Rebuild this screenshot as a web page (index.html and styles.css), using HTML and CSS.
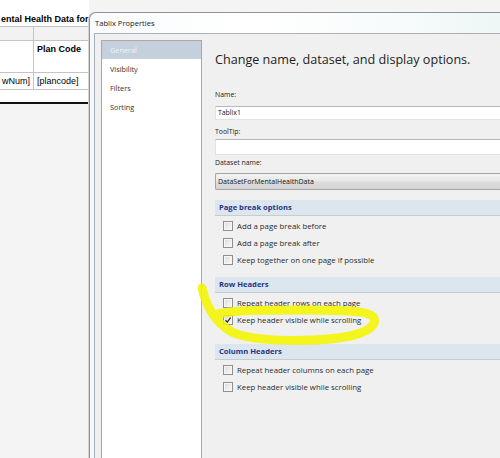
FILE: index.html
```html
<!DOCTYPE html>
<html>
<head>
<meta charset="utf-8">
<link rel="stylesheet" href="styles.css">
</head>
<body>
<div class="designer">
  <div class="rpt-title">ental Health Data for</div>
  <div class="rpt-table">
    <div class="rpt-row r0"><div class="c1"></div><div class="c2"></div></div>
    <div class="rpt-row r1"><div class="c1"></div><div class="c2 bold">Plan Code</div></div>
    <div class="rpt-row r2"><div class="c1 right">wNum]</div><div class="c2">[plancode]</div></div>
  </div>
  <div class="rpt-gap"></div>
  <div class="rpt-rule"></div>
  <div class="rpt-canvas"></div>
</div>

<div class="dialog">
  <div class="titlebar">Tablix Properties</div>
  <div class="dlg-body">
    <div class="nav">
      <div class="nav-item selected">General</div>
      <div class="nav-item">Visibility</div>
      <div class="nav-item">Filters</div>
      <div class="nav-item">Sorting</div>
    </div>
    <div class="content">
      <div class="heading">Change name, dataset, and display options.</div>
      <div class="label l-name">Name:</div>
      <div class="input i-name">Tablix1</div>
      <div class="label l-tip">ToolTip:</div>
      <div class="input i-tip"></div>
      <div class="label l-ds">Dataset name:</div>
      <div class="combo">DataSetForMentalHealthData</div>

      <div class="section s-page">Page break options</div>
      <div class="items">
        <div class="item"><span class="cb"></span><span>Add a page break before</span></div>
        <div class="item"><span class="cb"></span><span>Add a page break after</span></div>
        <div class="item"><span class="cb"></span><span>Keep together on one page if possible</span></div>
      </div>

      <div class="section s-row">Row Headers</div>
      <div class="items">
        <div class="item"><span class="cb"></span><span>Repeat header rows on each page</span></div>
        <div class="item"><span class="cb checked"><svg viewBox="0 0 10 10" width="10" height="10"><path d="M2.5 5.2 L4.2 7.2 L7.6 2.6" fill="none" stroke="#2a2a2a" stroke-width="1.2"/></svg></span><span>Keep header visible while scrolling</span></div>
      </div>

      <div class="section s-col">Column Headers</div>
      <div class="items">
        <div class="item"><span class="cb"></span><span>Repeat header columns on each page</span></div>
        <div class="item"><span class="cb"></span><span>Keep header visible while scrolling</span></div>
      </div>
    </div>
  </div>
</div>

<svg class="marker" viewBox="0 0 500 458" width="500" height="458">
  <path d="M202 288 C 206 305, 214 322, 232 332 C 255 343, 320 342, 350 336 C 368 332, 377 325, 374 318 C 370 310, 340 310, 300 310 C 260 310, 235 310, 218 314" fill="none" stroke="#f4f400" stroke-width="9" stroke-linecap="round" stroke-linejoin="round" opacity="0.88"/>
</svg>
</body>
</html>
```

FILE: styles.css
```css
html, body {
  margin: 0;
  padding: 0;
}
body {
  width: 500px;
  height: 458px;
  overflow: hidden;
  position: relative;
  background: #f4f4f4;
  font-family: "Open Sans", "Noto Sans", sans-serif;
}

/* ---------- report designer behind the dialog ---------- */
.designer {
  width: 89px;
  height: 458px;
  overflow: hidden;
  display: flex;
  flex-direction: column;
  font-family: "Liberation Sans", Arial, sans-serif;
  color: #000;
}
.rpt-title {
  background: #fff;
  height: 13px;
  padding-top: 13px;
  line-height: 12px;
  font-size: 9px;
  font-weight: bold;
  padding-left: 1px;
  white-space: nowrap;
  overflow: hidden;
}
.rpt-table {
  background: #fff;
  border-top: 1px solid #c4c4c4;
}
.rpt-row {
  display: grid;
  grid-template-columns: 34px 1fr;
  border-bottom: 1px solid #c4c4c4;
  font-size: 9px;
  line-height: 12px;
}
.rpt-row .c1 {
  border-right: 1px solid #c4c4c4;
}
.rpt-row .c2 {
  padding-left: 3px;
  white-space: nowrap;
  overflow: hidden;
}
.r0 { height: 13px; background: #f2f2f2; }
.r1 { height: 31px; }
.r1 .c2 { padding-top: 2px; }
.r2 { height: 16px; }
.r2 .c1, .r2 .c2 { padding-top: 2px; }
.right { text-align: right; padding-right: 3px; white-space: nowrap; overflow: hidden; }
.bold { font-weight: bold; }
.rpt-gap {
  background: #fff;
  height: 12px;
}
.rpt-rule {
  height: 2px;
  background: #111;
}
.rpt-canvas {
  flex: 1;
  background: #f4f4f4;
}

/* ---------- dialog window ---------- */
.dialog {
  position: absolute;
  left: 89px;
  top: 12px;
  right: 0;
  bottom: 0;
  border: 1px solid #8c949b;
  border-right: none;
  border-bottom: none;
  border-radius: 7px 0 0 0;
  background: #f5f8fa;
  box-shadow: -1px 0 0 #d4d4d4;
  display: flex;
  flex-direction: column;
  overflow: hidden;
}
.titlebar {
  height: 20px;
  line-height: 20px;
  padding-left: 5px;
  font-size: 7.6px;
  color: #1a1a1a;
  border-radius: 7px 0 0 0;
  background: linear-gradient(to right, #f9fbfc 0%, #ffffff 40%, #f7fbfb 75%, #eef6f6 100%);
}
.dlg-body {
  flex: 1;
  margin-left: 4px;
  border-top: 1px solid #a9b0b6;
  border-left: 1px solid #a9b0b6;
  background: #f0f0f0;
  padding: 6px 0 0 6px;
  display: flex;
  min-width: 0;
}
.nav {
  width: 101px;
  flex: none;
  box-sizing: border-box;
  border: 1px solid #a8a8a8;
  border-bottom: none;
  background: #fff;
}
.nav-item {
  height: 19px;
  line-height: 19px;
  padding-left: 8px;
  font-size: 7.3px;
  color: #333;
}
.nav-item.selected {
  height: 18px;
  line-height: 18px;
  margin-bottom: 1px;
  background: #c4d0dc;
  color: #f4f6f8;
}
.content {
  flex: 1;
  min-width: 0;
  padding-left: 13px;
  display: flex;
  flex-direction: column;
  color: #222;
}
.heading {
  margin-top: 10px;
  height: 20px;
  line-height: 20px;
  font-size: 12.6px;
  color: #1e1e1e;
  white-space: nowrap;
}
.label {
  height: 12px;
  line-height: 12px;
  font-size: 6.9px;
  color: #222;
}
.l-name { margin-top: 19px; }
.l-tip { margin-top: 6px; }
.l-ds { margin-top: 2px; }
.input {
  box-sizing: border-box;
  background: #fff;
  border: 1px solid #e3e3e6;
  border-top-color: #b5b7bc;
  border-right: none;
  padding-left: 2px;
  font-size: 6.9px;
  color: #111;
}
.i-name { margin-top: 5px; height: 14px; line-height: 12px; }
.i-tip { margin-top: 1px; height: 16px; }
.combo {
  box-sizing: border-box;
  margin-top: 4px;
  height: 17px;
  line-height: 15px;
  padding-left: 2px;
  border: 1px solid #a4a4a4;
  border-right: none;
  border-radius: 2px 0 0 2px;
  background: linear-gradient(to bottom, #f3f3f3 0%, #e8e8e8 45%, #dcdcdc 55%, #d4d4d4 100%);
  font-size: 7px;
  color: #111;
}
.section {
  box-sizing: border-box;
  height: 16px;
  line-height: 15px;
  padding-left: 4px;
  background: #dce6ee;
  border-bottom: 1px solid #c5ccd2;
  font-size: 7.6px;
  font-weight: bold;
  color: #1f3585;
}
.s-page { margin-top: 10px; }
.s-row { margin-top: 9px; }
.s-col { margin-top: 16px; }
.items {
  margin-top: 1px;
  display: flex;
  flex-direction: column;
}
.item {
  height: 17px;
  display: flex;
  align-items: center;
  gap: 4px;
  padding-left: 8px;
  font-size: 7.8px;
  color: #2a2a2a;
  white-space: nowrap;
}
.cb {
  box-sizing: border-box;
  width: 10px;
  height: 10px;
  flex: none;
  border: 1px solid #8f8f8f;
  background: linear-gradient(135deg, #dadada 0%, #eeeeee 60%, #fafafa 100%);
  box-shadow: inset 0 0 0 1px #f6f6f6;
  position: relative;
}
.cb svg {
  position: absolute;
  left: -1px;
  top: -1px;
}

/* ---------- yellow highlighter annotation ---------- */
.marker {
  position: absolute;
  left: 0;
  top: 0;
  pointer-events: none;
}
```
